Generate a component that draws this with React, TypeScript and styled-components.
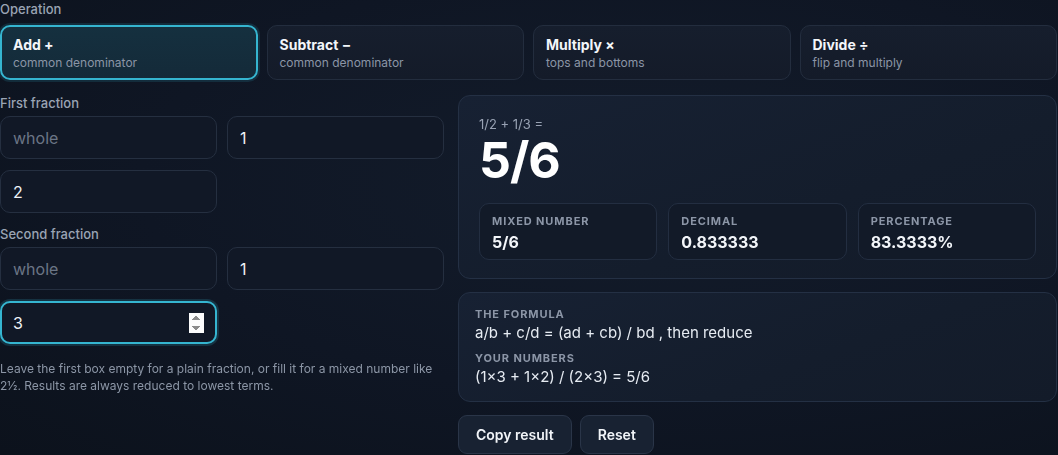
import React, { useState } from "react";
import styled, { createGlobalStyle, css } from "styled-components";

const GlobalStyle = createGlobalStyle`
  * { box-sizing: border-box; }
  html, body {
    margin: 0;
    padding: 0;
    background: #0e1522;
  }
  body {
    font-family: Inter, "Noto Sans", "Liberation Sans", sans-serif;
    color: #e8edf4;
  }
`;

const Page = styled.div`
  width: 1058px;
  height: 455px;
  overflow: hidden;
  background: radial-gradient(ellipse at 60% 40%, #131c2b 0%, #0f1624 55%, #0c121c 100%);
  padding-right: 1px;
`;

const Label = styled.div`
  font-size: 13px;
  font-weight: 500;
  color: #9aa4b4;
  line-height: 18px;
`;

const OpRow = styled.div`
  display: grid;
  grid-template-columns: repeat(4, 1fr);
  gap: 9px;
  margin-top: 7px;
`;

const OpCard = styled.button<{ $active?: boolean }>`
  height: 55px;
  text-align: left;
  padding: 9px 12px 0;
  border-radius: 10px;
  border: 1px solid #232d3e;
  background: linear-gradient(180deg, #161e2d 0%, #141b29 100%);
  font-family: inherit;
  cursor: pointer;
  display: flex;
  flex-direction: column;
  ${(p) =>
    p.$active &&
    css`
      border: 2px solid #35b5d0;
      padding: 8px 11px 0;
      background: linear-gradient(180deg, #15303f 0%, #142a39 100%);
      box-shadow: 0 0 0 2px rgba(53, 181, 208, 0.15);
    `}
`;

const OpTitle = styled.span`
  font-size: 14px;
  font-weight: 700;
  color: #f3f6fa;
  line-height: 20px;
`;

const OpSub = styled.span`
  font-size: 12px;
  color: #8b95a6;
  line-height: 16px;
`;

const Main = styled.div`
  display: grid;
  grid-template-columns: 444px 1fr;
  gap: 14px;
  margin-top: 14px;
`;

const LeftCol = styled.div`
  display: flex;
  flex-direction: column;
`;

const FieldGrid = styled.div`
  display: grid;
  grid-template-columns: 1fr 1fr;
  column-gap: 10px;
  row-gap: 11px;
  margin-top: 4px;
  margin-bottom: 12px;
`;

const NumInput = styled.input<{ $focused?: boolean }>`
  height: 43px;
  width: 100%;
  border-radius: 10px;
  border: 1px solid #252f40;
  background: #111826;
  color: #eef2f7;
  font-family: inherit;
  font-size: 16px;
  padding: 0 12px;
  outline: none;
  &::placeholder {
    color: #6b7585;
  }
  ${(p) =>
    p.$focused &&
    css`
      border: 2px solid #35b5d0;
      padding: 0 11px;
      box-shadow: 0 0 0 2px rgba(53, 181, 208, 0.18);
    `}
`;

const Hint = styled.p`
  margin: 4px 0 0;
  font-size: 12px;
  line-height: 17px;
  color: #8c96a6;
`;

const RightCol = styled.div`
  display: flex;
  flex-direction: column;
  gap: 13px;
  padding-top: 1px;
`;

const Panel = styled.div<{ $pad: string }>`
  border: 1px solid #243044;
  border-radius: 12px;
  background: linear-gradient(160deg, #172133 0%, #141d2c 60%, #131b29 100%);
  padding: ${(p) => p.$pad};
`;

const Equation = styled.div`
  font-size: 13px;
  color: #98a2b3;
  line-height: 18px;
`;

const BigResult = styled.div`
  font-size: 50px;
  font-weight: 700;
  color: #ffffff;
  line-height: 54px;
  letter-spacing: -1px;
`;

const StatRow = styled.div`
  display: grid;
  grid-template-columns: repeat(3, 1fr);
  gap: 11px;
  margin-top: 16px;
`;

const StatBox = styled.div`
  height: 57px;
  border: 1px solid #232e41;
  border-radius: 10px;
  background: #121a28;
  padding: 10px 12px 0;
`;

const SmallCaps = styled.div`
  font-size: 11px;
  font-weight: 700;
  letter-spacing: 0.9px;
  color: #8c96a7;
  text-transform: uppercase;
  line-height: 15px;
`;

const StatValue = styled.div`
  font-size: 16px;
  font-weight: 700;
  color: #f2f5f9;
  line-height: 22px;
  margin-top: 2px;
`;

const FormulaText = styled.div<{ $last?: boolean }>`
  font-size: 15px;
  color: #e6ebf2;
  line-height: 21px;
  margin-bottom: ${(p) => (p.$last ? "0" : "8px")};
`;

const ButtonRow = styled.div`
  display: flex;
  gap: 8px;
`;

const Button = styled.button`
  height: 39px;
  padding: 0 17px;
  border-radius: 9px;
  border: 1px solid #2a3548;
  background: #182232;
  color: #f1f4f8;
  font-family: inherit;
  font-size: 14px;
  font-weight: 600;
  cursor: pointer;
`;

const ops = [
  { title: "Add +", sub: "common denominator" },
  { title: "Subtract −", sub: "common denominator" },
  { title: "Multiply ×", sub: "tops and bottoms" },
  { title: "Divide ÷", sub: "flip and multiply" },
];

export default function App() {
  const [active, setActive] = useState(0);
  return (
    <>
      <GlobalStyle />
      <Page>
        <Label>Operation</Label>
        <OpRow>
          {ops.map((o, i) => (
            <OpCard key={o.title} $active={active === i} onClick={() => setActive(i)}>
              <OpTitle>{o.title}</OpTitle>
              <OpSub>{o.sub}</OpSub>
            </OpCard>
          ))}
        </OpRow>
        <Main>
          <LeftCol>
            <Label>First fraction</Label>
            <FieldGrid>
              <NumInput type="number" placeholder="whole" />
              <NumInput type="number" defaultValue={1} />
              <NumInput type="number" defaultValue={2} />
            </FieldGrid>
            <Label>Second fraction</Label>
            <FieldGrid>
              <NumInput type="number" placeholder="whole" />
              <NumInput type="number" defaultValue={1} />
              <NumInput type="number" defaultValue={3} $focused autoFocus />
            </FieldGrid>
            <Hint>
              Leave the first box empty for a plain fraction, or fill it for a mixed number like
              2½. Results are always reduced to lowest terms.
            </Hint>
          </LeftCol>
          <RightCol>
            <Panel $pad="19px 20px 18px">
              <Equation>1/2 + 1/3 =</Equation>
              <BigResult>5/6</BigResult>
              <StatRow>
                <StatBox>
                  <SmallCaps>Mixed number</SmallCaps>
                  <StatValue>5/6</StatValue>
                </StatBox>
                <StatBox>
                  <SmallCaps>Decimal</SmallCaps>
                  <StatValue>0.833333</StatValue>
                </StatBox>
                <StatBox>
                  <SmallCaps>Percentage</SmallCaps>
                  <StatValue>83.3333%</StatValue>
                </StatBox>
              </StatRow>
            </Panel>
            <Panel $pad="14px 16px 14px">
              <SmallCaps>The formula</SmallCaps>
              <FormulaText>a/b + c/d = (ad + cb) / bd , then reduce</FormulaText>
              <SmallCaps>Your numbers</SmallCaps>
              <FormulaText $last>(1×3 + 1×2) / (2×3) = 5/6</FormulaText>
            </Panel>
            <ButtonRow>
              <Button>Copy result</Button>
              <Button>Reset</Button>
            </ButtonRow>
          </RightCol>
        </Main>
      </Page>
    </>
  );
}
